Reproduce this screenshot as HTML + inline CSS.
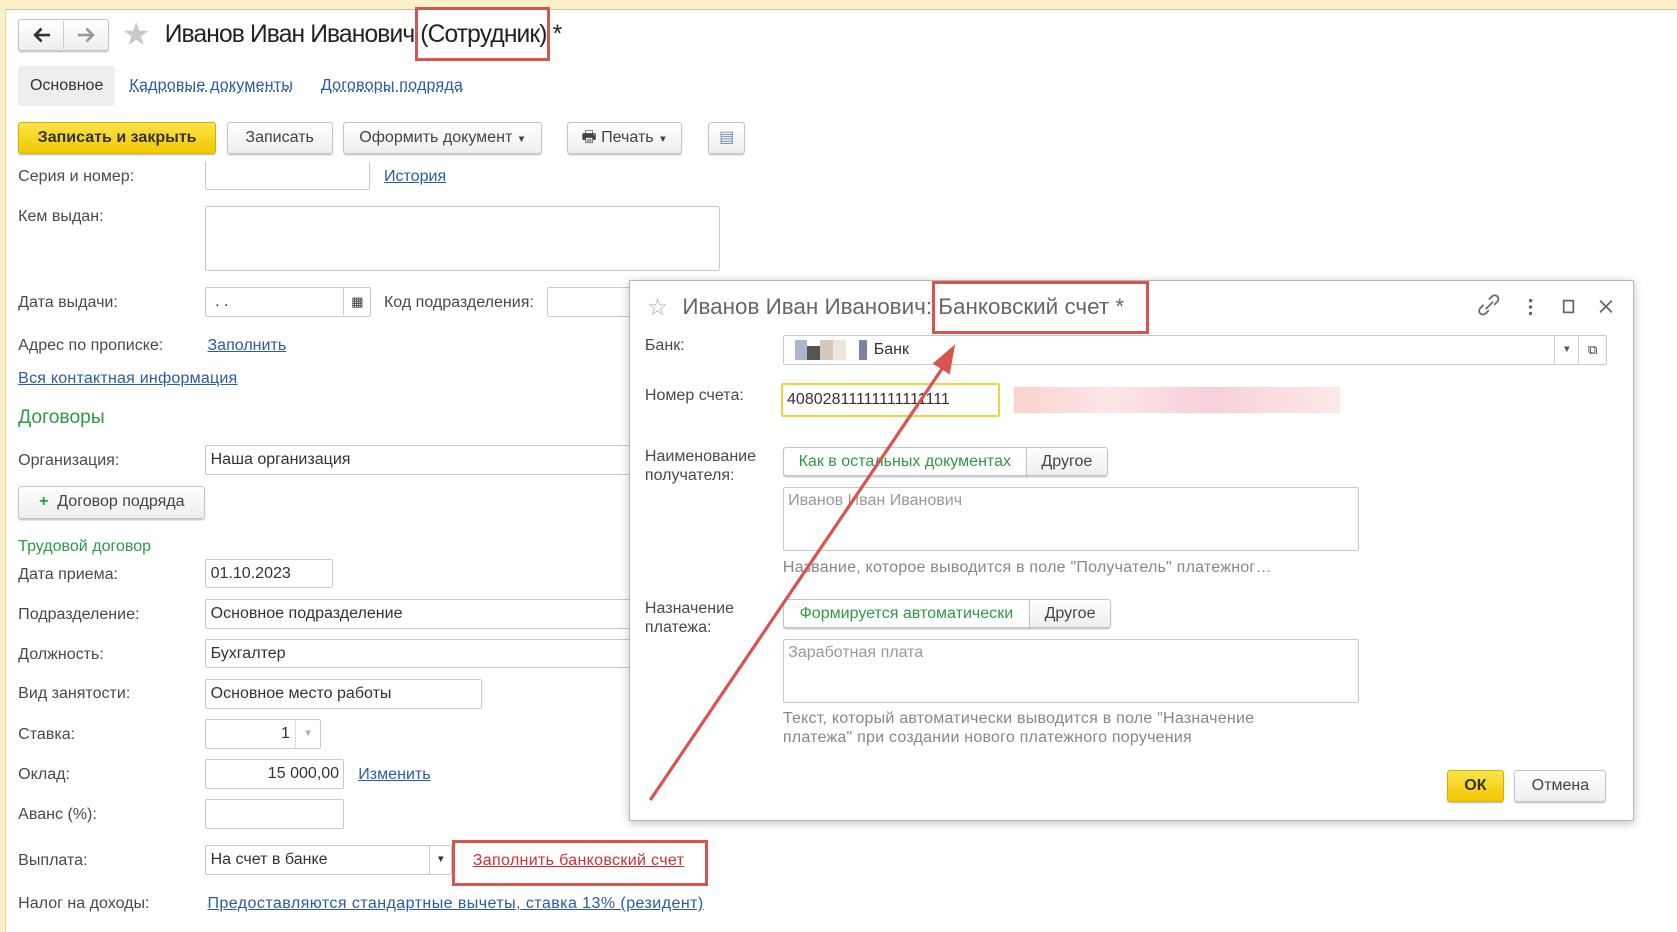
<!DOCTYPE html>
<html><head><meta charset="utf-8"><style>
html,body{margin:0;padding:0;}
body{width:1568px;height:871px;zoom:1.06952;overflow:hidden;background:#fff;font-family:"Liberation Sans",Arial,sans-serif;font-size:15px;color:#4a4a4a;position:relative}
.a{position:absolute;white-space:nowrap}
.lnk{color:#2a5aa8;text-decoration:underline}
.inp{position:absolute;border:1px solid #c8c8c8;background:#fff;box-sizing:border-box;border-radius:2px;padding:0 4px;line-height:26px;color:#333;white-space:nowrap;overflow:hidden}
.btn{position:absolute;border:1px solid #c4c4c4;border-radius:3px;background:linear-gradient(#fff,#eee);box-shadow:0 1px 1px rgba(0,0,0,.2);box-sizing:border-box;text-align:center;color:#444;line-height:28px;white-space:nowrap}
.green{color:#2e9a44}
.red{position:absolute;border:3px solid #d9534f;box-sizing:border-box}
</style></head><body>
<div class="a" style="left:0;top:0;width:1568px;height:8px;background:#fbf0c8;border-bottom:1px solid #c8c0a0"></div>
<div class="a" style="left:0;top:8px;width:5px;height:863px;background:#fbf0c8;border-right:1px solid #e6dca8"></div>

<div class="btn" style="left:17px;top:18px;width:85px;height:30px"></div>
<div class="a" style="left:59px;top:20px;width:1px;height:26px;background:#ccc"></div>
<svg class="a" style="left:17px;top:18px" width="85" height="30">
<path d="M30 15H16M22 9l-6 6 6 6" stroke="#333" stroke-width="2.5" fill="none"/>
<path d="M56 15h14M64 9l6 6-6 6" stroke="#999" stroke-width="2.5" fill="none"/>
</svg>
<div class="a" style="left:114px;top:14px;font-size:30px;color:#c8c8c8">★</div>
<div class="a" style="left:154px;top:20px;font-size:23px;color:#222;letter-spacing:-0.8px">Иванов Иван Иванович (Сотрудник) *</div>
<div class="red" style="left:388px;top:7px;width:126px;height:50px"></div>

<div class="a" style="left:17px;top:62px;width:91px;height:37px;background:#eee;border-radius:3px"></div>
<div class="a" style="left:28px;top:71px;color:#333">Основное</div>
<div class="a lnk" style="left:121px;top:71px;text-decoration:underline dotted;letter-spacing:.2px">Кадровые документы</div>
<div class="a lnk" style="left:300px;top:71px;text-decoration:underline dotted;letter-spacing:.2px">Договоры подряда</div>

<div class="btn" style="left:17px;top:114px;width:185px;height:30px;background:linear-gradient(#fbe44a,#f1c800);border-color:#d6b000;font-weight:bold;color:#333">Записать и закрыть</div>
<div class="btn" style="left:212px;top:114px;width:99px;height:30px">Записать</div>
<div class="btn" style="left:321px;top:114px;width:186px;height:30px">Оформить документ <span style="font-size:9px">▼</span></div>
<div class="btn" style="left:530px;top:114px;width:108px;height:30px">🖶 Печать <span style="font-size:9px">▼</span></div>
<div class="btn" style="left:662px;top:114px;width:35px;height:30px;color:#6a8ab8">▤</div>

<div class="a" style="left:17px;top:156px">Серия и номер:</div>
<div class="inp" style="left:192px;top:151px;width:154px;height:27px;border-top:none"></div>
<div class="a lnk" style="left:359px;top:156px">История</div>
<div class="a" style="left:17px;top:194px">Кем выдан:</div>
<div class="inp" style="left:192px;top:193px;width:481px;height:60px"></div>
<div class="a" style="left:17px;top:274px">Дата выдачи:</div>
<div class="inp" style="left:192px;top:268px;width:155px;height:28px">&nbsp;. .<span style="position:absolute;right:0;top:0;width:24px;border-left:1px solid #ccc;text-align:center;font-size:12px">▦</span></div>
<div class="a" style="left:359px;top:274px">Код подразделения:</div>
<div class="inp" style="left:511px;top:268px;width:80px;height:28px"></div>
<div class="a" style="left:17px;top:314px">Адрес по прописке:</div>
<div class="a lnk" style="left:194px;top:314px">Заполнить</div>
<div class="a lnk" style="left:17px;top:345px;letter-spacing:.2px">Вся контактная информация</div>
<div class="a green" style="left:17px;top:381px;font-size:18px">Договоры</div>
<div class="a" style="left:17px;top:422px">Организация:</div>
<div class="inp" style="left:192px;top:416px;width:400px;height:28px">Наша организация</div>
<div class="btn" style="left:17px;top:454px;width:175px;height:31px"><span class="green" style="font-weight:bold">+</span>&nbsp; Договор подряда</div>
<div class="a green" style="left:17px;top:502px">Трудовой договор</div>
<div class="a" style="left:17px;top:528px">Дата приема:</div>
<div class="inp" style="left:192px;top:523px;width:119px;height:27px">01.10.2023</div>
<div class="a" style="left:17px;top:566px">Подразделение:</div>
<div class="inp" style="left:192px;top:560px;width:400px;height:28px">Основное подразделение</div>
<div class="a" style="left:17px;top:603px">Должность:</div>
<div class="inp" style="left:192px;top:597px;width:400px;height:28px">Бухгалтер</div>
<div class="a" style="left:17px;top:640px">Вид занятости:</div>
<div class="inp" style="left:192px;top:635px;width:259px;height:28px">Основное место работы</div>
<div class="a" style="left:17px;top:678px">Ставка:</div>
<div class="inp" style="left:192px;top:672px;width:108px;height:28px;text-align:right;padding-right:28px">1<span style="position:absolute;right:0;width:22px;border-left:1px solid #ddd;text-align:center;color:#aaa;font-size:9px">▼</span></div>
<div class="a" style="left:17px;top:715px">Оклад:</div>
<div class="inp" style="left:192px;top:710px;width:130px;height:28px;text-align:right">15 000,00</div>
<div class="a lnk" style="left:335px;top:715px">Изменить</div>
<div class="a" style="left:17px;top:753px">Аванс (%):</div>
<div class="inp" style="left:192px;top:747px;width:130px;height:28px"></div>
<div class="a" style="left:17px;top:796px">Выплата:</div>
<div class="inp" style="left:192px;top:790px;width:231px;height:28px">На счет в банке<span style="position:absolute;right:0;width:20px;border-left:1px solid #ccc;text-align:center;font-size:9px">▼</span></div>
<div class="a" style="left:442px;top:796px;color:#d03030;text-decoration:underline;letter-spacing:.3px">Заполнить банковский счет</div>
<div class="red" style="left:423px;top:785px;width:239px;height:43px"></div>
<div class="a" style="left:17px;top:836px">Налог на доходы:</div>
<div class="a lnk" style="left:194px;top:836px;letter-spacing:.4px">Предоставляются стандартные вычеты, ставка 13% (резидент)</div>

<!-- dialog -->
<div class="a" style="left:588px;top:262px;width:938px;height:504px;background:#fff;border:1px solid #b8b8b8;box-shadow:0 2px 8px rgba(0,0,0,.25)"></div>
<div class="a" style="left:605px;top:274px;font-size:22px;color:#aaa">☆</div>
<div class="a" style="left:638px;top:275px;font-size:21px;color:#666">Иванов Иван Иванович: Банковский счет *</div>
<div class="red" style="left:871px;top:263px;width:203px;height:49px"></div>
<svg class="a" style="left:1380px;top:272px" width="140" height="30">
<g stroke="#666" stroke-width="1.6" fill="none">
<path d="M12 18l-3 3a3.5 3.5 0 0 1-5-5l3-3M12 8l3-3a3.5 3.5 0 0 1 5 5l-3 3M9 17l7-7"/>
<rect x="82" y="9" width="9" height="11"/>
<path d="M116 9l11 11M127 9l-11 11"/>
</g>
<g fill="#666"><circle cx="51" cy="9" r="1.6"/><circle cx="51" cy="15" r="1.6"/><circle cx="51" cy="21" r="1.6"/></g>
</svg>

<div class="a" style="left:603px;top:314px">Банк:</div>
<div class="inp" style="left:732px;top:313px;width:771px;height:28px;padding-left:84px">Банк
<span style="position:absolute;left:10px;top:4px;width:12px;height:19px;background:#a9b6d0"></span><span style="position:absolute;left:22px;top:10px;width:12px;height:13px;background:#555"></span><span style="position:absolute;left:34px;top:4px;width:12px;height:19px;background:#d8c8b8"></span><span style="position:absolute;left:46px;top:4px;width:12px;height:19px;background:#ece6de"></span><span style="position:absolute;left:70px;top:4px;width:8px;height:19px;background:#7a84a0"></span>
<span style="position:absolute;right:26px;top:0;width:22px;border-left:1px solid #ccc;text-align:center;font-size:9px;color:#555">▼</span><span style="position:absolute;right:0;top:0;width:26px;border-left:1px solid #ccc;text-align:center;font-size:12px">⧉</span></div>
<div class="a" style="left:603px;top:361px">Номер счета:</div>
<div class="inp" style="left:730px;top:358px;width:205px;height:32px;border:2px solid #f0cf40;line-height:28px">40802811111111111111</div>
<div class="a" style="left:948px;top:362px;width:305px;height:24px;background:linear-gradient(90deg,#f8c8c0,#fbe0e4 30%,#f4c4d0 60%,#fbe4e4);opacity:.8"></div>
<div class="a" style="left:603px;top:418px;line-height:18px">Наименование<br>получателя:</div>
<div class="btn" style="left:732px;top:418px;width:228px;height:27px;line-height:25px;border-radius:3px 0 0 3px;background:#fff"><span class="green">Как в остальных документах</span></div>
<div class="btn" style="left:959px;top:418px;width:77px;height:27px;line-height:25px;border-radius:0 3px 3px 0">Другое</div>
<div class="inp" style="left:732px;top:455px;width:539px;height:60px;color:#999;line-height:24px">Иванов Иван Иванович</div>
<div class="a" style="left:732px;top:522px;color:#888;letter-spacing:.2px">Название, которое выводится в поле "Получатель" платежног…</div>
<div class="a" style="left:603px;top:560px;line-height:18px">Назначение<br>платежа:</div>
<div class="btn" style="left:732px;top:560px;width:231px;height:27px;line-height:25px;border-radius:3px 0 0 3px;background:#fff"><span class="green">Формируется автоматически</span></div>
<div class="btn" style="left:962px;top:560px;width:77px;height:27px;line-height:25px;border-radius:0 3px 3px 0">Другое</div>
<div class="inp" style="left:732px;top:597px;width:539px;height:60px;color:#999;line-height:24px">Заработная плата</div>
<div class="a" style="left:732px;top:663px;color:#888;line-height:18px;letter-spacing:.2px">Текст, который автоматически выводится в поле "Назначение<br>платежа" при создании нового платежного поручения</div>
<div class="btn" style="left:1353px;top:720px;width:53px;height:30px;background:linear-gradient(#fbe44a,#f1c800);border-color:#d6b000;font-weight:bold;color:#333">ОК</div>
<div class="btn" style="left:1416px;top:720px;width:86px;height:30px">Отмена</div>

<svg class="a" style="left:0;top:0" width="1568" height="871">
<line x1="608" y1="748" x2="884" y2="340" stroke="#d9534f" stroke-width="3"/>
<polygon points="893,322 872,340 888,350" fill="#d9534f"/>
</svg>
</body></html>
